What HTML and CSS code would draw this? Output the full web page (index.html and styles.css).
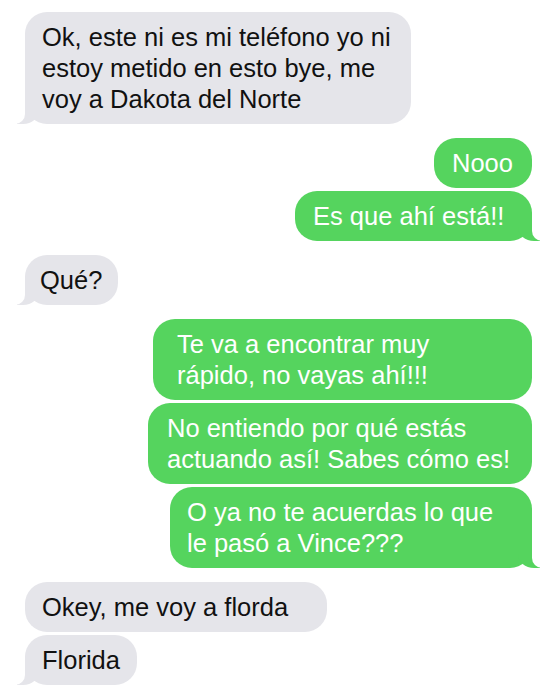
FILE: index.html
```
<!DOCTYPE html>
<html lang="es">
<head>
<meta charset="utf-8">
<title>Chat</title>
<link rel="stylesheet" href="styles.css">
</head>
<body>
<div class="chat">
  <div class="msg them tail w-b1">Ok, este ni es mi teléfono yo ni<br>estoy metido en esto bye, me<br>voy a Dakota del Norte</div>

  <div class="msg me group w-nooo">Nooo</div>
  <div class="msg me tail w-esque">Es que ahí está!!</div>

  <div class="msg them tail group w-que">Qué?</div>

  <div class="msg me group w-teva">Te va a encontrar muy<br>rápido, no vayas ahí!!!</div>
  <div class="msg me w-noent">No entiendo por qué estás<br>actuando así! Sabes cómo es!</div>
  <div class="msg me tail w-oya">O ya no te acuerdas lo que<br>le pasó a Vince???</div>

  <div class="msg them group w-okey">Okey, me voy a florda</div>
  <div class="msg them tail w-flor">Florida</div>
</div>
</body>
</html>
```

FILE: styles.css
```
html, body {
  margin: 0;
  padding: 0;
  background: #ffffff;
}

body {
  font-family: "Liberation Sans", Arial, Helvetica, sans-serif;
  font-size: 25.5px;
  line-height: 31px;
}

.chat {
  display: flex;
  flex-direction: column;
  padding: 12px 23px 0 25px;
}

.msg {
  position: relative;
  box-sizing: border-box;
  padding: 10px 10px 9px 17px;
  border-radius: 22px;
  white-space: nowrap;
  margin-top: 3px;
}

.msg.group {
  margin-top: 14px;
}

.msg:first-child {
  margin-top: 0;
}

.them {
  align-self: flex-start;
  background: #e5e5ea;
  color: #111111;
}

.me {
  align-self: flex-end;
  background: #55d45e;
  color: #ffffff;
}

/* tails */
.them.tail::before {
  content: "";
  position: absolute;
  bottom: 0;
  left: -8px;
  width: 22px;
  height: 22px;
  background: #e5e5ea;
  border-bottom-right-radius: 16px 14px;
}
.them.tail::after {
  content: "";
  position: absolute;
  bottom: 0;
  left: -10px;
  width: 10px;
  height: 22px;
  background: #ffffff;
  border-bottom-right-radius: 10px;
}
.me.tail::before {
  content: "";
  position: absolute;
  bottom: 0;
  right: -8px;
  width: 22px;
  height: 22px;
  background: #55d45e;
  border-bottom-left-radius: 16px 14px;
}
.me.tail::after {
  content: "";
  position: absolute;
  bottom: 0;
  right: -10px;
  width: 10px;
  height: 22px;
  background: #ffffff;
  border-bottom-left-radius: 10px;
}

/* widths */
.w-b1 { width: 386px; }
.w-nooo { width: 98px; padding-left: 18px; }
.w-esque { width: 237px; padding-left: 18px; }
.w-que { width: 93px; padding-left: 15px; }
.w-teva { width: 379px; padding-left: 24px; }
.w-noent { width: 384px; padding-left: 19px; }
.w-oya { width: 362px; padding-left: 17px; }
.w-okey { width: 302px; }
.w-flor { width: 112px; }
```
